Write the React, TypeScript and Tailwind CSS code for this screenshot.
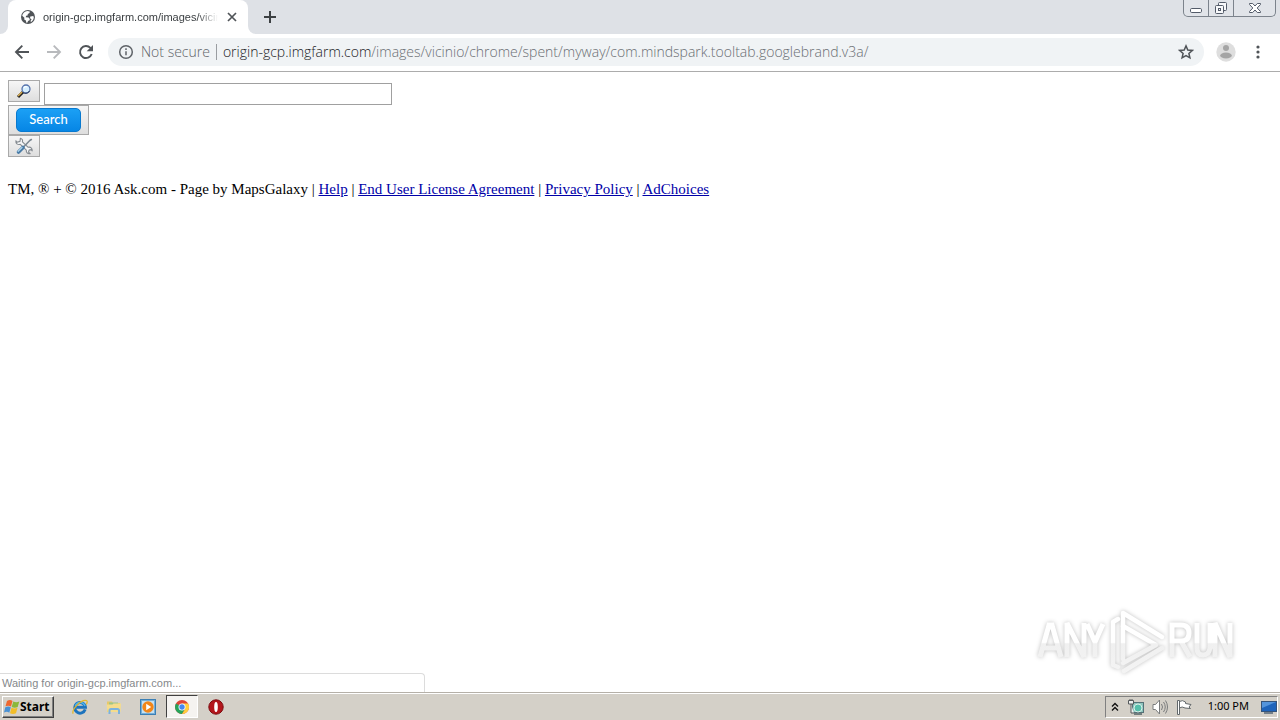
import type { ReactNode } from "react";

function GlobeIcon() {
  return (
    <svg className="size-4 shrink-0" viewBox="0 0 16 16" aria-hidden="true">
      <circle cx="8" cy="8" r="7" fill="#505458" />
      <path d="M2.2 6.8C2.6 4.2 4.8 2.3 7.4 2.1l2.4.3-.3 1.7-1.7.9-.2 1.4-1.5.4-.4 1.5 2.9.2 1.2 1.5-.2 1.3-1.6.6-.5 1.5-1.2.3-.4-2.1-1.7-1.2.2-1.6z" fill="#fff" />
      <path d="m10.3 7.6 3-.5.5 1.4c-.2 2-1.3 3.7-3 4.7l-.2-1.4 1-1.5-1.6-1z" fill="#fff" />
    </svg>
  );
}

function ChromeButton({ label, disabled, children }: { label: string; disabled?: boolean; children: ReactNode }) {
  return (
    <button aria-label={label} disabled={disabled} className="flex size-5 shrink-0 items-center justify-center text-[#505458] disabled:text-[#b8babd]">
      {children}
    </button>
  );
}

function TabStrip() {
  return (
    <div className="flex h-[34px] items-stretch bg-[#dee1e6]">
      <div className="flex w-2 bg-white">
        <div className="flex-1 rounded-br-lg bg-[#dee1e6]" />
      </div>
      <div className="flex w-60 items-center rounded-t-lg bg-white pr-2 pl-3">
        <GlobeIcon />
        <span className="ml-[7px] min-w-0 flex-1 font-['Liberation_Sans',sans-serif] text-[11px] whitespace-nowrap text-[#3c4043] [mask-image:linear-gradient(to_right,black_88%,transparent)]">
          origin-gcp.imgfarm.com/images/vicin
        </span>
        <button aria-label="Close tab" className="ml-1.5 flex size-4 shrink-0 items-center justify-center">
          <svg className="size-3" viewBox="0 0 12 12" fill="none" stroke="#505458" strokeWidth="1.7">
            <path d="m2 2 8 8M10 2l-8 8" />
          </svg>
        </button>
      </div>
      <div className="flex w-2 bg-white">
        <div className="flex-1 rounded-bl-lg bg-[#dee1e6]" />
      </div>
      <button aria-label="New tab" className="flex w-7 items-center justify-center">
        <svg className="size-[14px]" viewBox="0 0 14 14" stroke="#3c4043" strokeWidth="2">
          <path d="M7 1v12M1 7h12" />
        </svg>
      </button>
      <div className="mr-1 ml-auto flex h-[17px] divide-x divide-[#7c838c] rounded-b-[5px] border border-t-0 border-[#7c838c] bg-[#e1e4e9]">
        <button aria-label="Minimize" className="flex w-[25px] items-center justify-center">
          <svg className="h-4 w-6" viewBox="0 0 24 16" fill="#fff" stroke="#535b69">
            <rect x="6.5" y="8.5" width="11" height="4" rx="1.2" />
          </svg>
        </button>
        <button aria-label="Restore" className="flex w-[25px] items-center justify-center">
          <svg className="h-4 w-6" viewBox="0 0 24 16" fill="#f7f8fa" stroke="#535b69">
            <rect x="9.5" y="2.5" width="8" height="8" rx="1" />
            <rect x="6.5" y="5.5" width="8" height="8" rx="1" />
            <rect x="9.5" y="8.5" width="2" height="2" />
          </svg>
        </button>
        <button aria-label="Close" className="flex w-[41px] items-center justify-center">
          <svg className="h-4 w-6" viewBox="0 0 24 16" fill="#fff" stroke="#535b69">
            <path d="M6.5 3.5h3.2L12 6l2.3-2.5h3.2v1L14.2 8l3.3 3.5v1h-3.2L12 10l-2.3 2.5H6.5v-1L9.8 8 6.5 4.5z" />
          </svg>
        </button>
      </div>
    </div>
  );
}

function Toolbar() {
  return (
    <div className="flex h-[38px] items-center border-b border-[#acacac] bg-white pb-0.5 pl-3">
      <div className="flex gap-3">
        <ChromeButton label="Back">
          <svg className="size-4" viewBox="0 0 16 16" fill="none" stroke="currentColor" strokeWidth="1.9">
            <path d="M15 8H2.5M8.3 1.7 2 8l6.3 6.3" />
          </svg>
        </ChromeButton>
        <ChromeButton label="Forward" disabled>
          <svg className="size-4" viewBox="0 0 16 16" fill="none" stroke="currentColor" strokeWidth="1.9">
            <path d="M1 8h12.5M7.7 1.7 14 8l-6.3 6.3" />
          </svg>
        </ChromeButton>
        <ChromeButton label="Reload">
          <svg className="size-4" viewBox="0 0 16 16" fill="none" stroke="currentColor" strokeWidth="1.9">
            <path d="M13.7 10A6 6 0 1 1 12.4 3.9L14 5.5" />
            <path d="M15 1v6.3H8.7z" fill="currentColor" stroke="none" />
          </svg>
        </ChromeButton>
      </div>
      <div className="ml-3 flex h-7 min-w-0 flex-1 items-center rounded-full bg-[#f0f3f5] px-2.5 font-['Open_Sans',sans-serif] text-sm font-light">
        <svg className="size-4 shrink-0" viewBox="0 0 16 16" fill="none" stroke="#5f6368" strokeWidth="1.5" aria-hidden="true">
          <circle cx="8" cy="8" r="6.3" />
          <path d="M8 7.2v4M8 4.3v1.6" />
        </svg>
        <span className="ml-[7px] shrink-0 text-[#5f6368]">Not secure</span>
        <span className="mx-1.5 h-4 w-px bg-[#9a9da1]" />
        <div role="textbox" aria-label="Address" tabIndex={0} className="min-w-0 flex-1 truncate text-[#6a6e73]">
          <span className="text-[#202124]">origin-gcp.imgfarm.com</span>
          /images/vicinio/chrome/spent/myway/com.mindspark.tooltab.googlebrand.v3a/
        </div>
        <button aria-label="Bookmark this page" className="size-4 shrink-0">
          <svg className="size-4" viewBox="0 0 16 16" fill="none" stroke="#505458" strokeWidth="1.5">
            <path d="m8 1.9 1.8 4.1 4.5.4-3.4 3 1 4.4L8 11.5l-3.9 2.3 1-4.4-3.4-3 4.5-.4z" />
          </svg>
        </button>
      </div>
      <button aria-label="Profile" className="ml-3 size-5">
        <svg className="size-5" viewBox="0 0 20 20">
          <circle cx="10" cy="10" r="9.7" fill="#dedede" />
          <circle cx="10" cy="6" r="3" fill="#a5a5a5" />
          <ellipse cx="10" cy="13.5" rx="5.8" ry="3" fill="#a5a5a5" />
        </svg>
      </button>
      <button aria-label="Menu" className="mr-3 ml-4 size-4">
        <svg className="size-4" viewBox="0 0 16 16" fill="#505458">
          <circle cx="6" cy="3" r="1.6" />
          <circle cx="6" cy="8" r="1.6" />
          <circle cx="6" cy="13" r="1.6" />
        </svg>
      </button>
    </div>
  );
}

function Watermark() {
  return (
    <svg className="absolute right-10 bottom-4 h-[70px] w-[210px] drop-shadow-[0_0_2px_rgba(0,0,0,0.25)]" viewBox="0 0 210 70" role="img" aria-label="ANY RUN">
      <defs>
        <linearGradient id="watermark-shade" gradientUnits="userSpaceOnUse" x1="0" y1="0" x2="0" y2="70">
          <stop offset="0.52" stopColor="#fff" />
          <stop offset="0.54" stopColor="#f0f0f0" />
          <stop offset="1" stopColor="#f4f4f4" />
        </linearGradient>
      </defs>
      <g fill="none" stroke="url(#watermark-shade)" strokeWidth="4.5" strokeLinejoin="round" strokeLinecap="round">
        <path d="M93 53V7l39 24" />
        <path d="M93 20l33 19-33 18" />
        <path d="M88 13l-5 3v43l5 2M94 65l38-23" />
      </g>
      <g fill="none" stroke="url(#watermark-shade)" strokeWidth="5">
        <path d="m10 51 9-32h3l9 32M13 42h15M37 51V17l17 34V17M57 18l8 18 8-18M65 34v17" />
        <path d="M142 51V19h9q8 0 8 8t-8 8h-9m9 0 9 16M167 17v25q0 7 6 7t7-7V17M185 51V17l15 34V17" />
      </g>
    </svg>
  );
}

const links = ["Help", "End User License Agreement", "Privacy Policy", "AdChoices"];
const greyButton =
  "flex items-center justify-center border border-[#a9a9a9] bg-linear-to-b from-[#f6f6f6] to-[#dedede]";

function PageContent() {
  return (
    <main className="relative flex-1 bg-white p-2">
      <form className="flex flex-col items-start">
        <div className="flex h-[25px] w-full items-start gap-1">
          <button type="button" aria-label="Search options" className={greyButton + " h-[22px] w-8"}>
            <svg className="size-4" viewBox="0 0 16 16">
              <path d="m2 14 5-5" stroke="#222" strokeWidth="3" />
              <path d="m2 13 4-4" stroke="#d9ad4f" strokeWidth="1.6" />
              <circle cx="10" cy="6" r="4" fill="#d5efff" stroke="#5673ad" strokeWidth="1.3" />
              <path d="M7 9.5c2 1.5 5 1 6.5-1.5" fill="none" stroke="#1d2c4d" />
              <path d="M8 5q1-2 3-1" fill="none" stroke="#fff" strokeWidth="1.3" />
            </svg>
          </button>
          <input aria-label="Search query" type="text" className="mt-[3px] h-[22px] w-[348px] border border-[#a0a0a0] px-1" />
        </div>
        <button type="button" className={greyButton + " h-[30px] w-[81px]"}>
          <span className="flex h-6 w-[65px] items-center justify-center rounded-[5px] border border-[#0879cf] bg-linear-to-b from-[#1ba0f5] to-[#0686e5] font-['Lato',sans-serif] text-[13px] font-medium text-white">
            Search
          </span>
        </button>
        <button type="button" aria-label="Settings" className={greyButton + " h-[22px] w-8"}>
          <svg className="size-[18px]" viewBox="0 0 18 18" fill="none" strokeLinecap="round" strokeLinejoin="round">
            <path d="M5.4 1.2 5 4.4 2 5.2.9 3.8C.6 6.5 2.5 8 5.3 7.4l6 5.8c-.2 2.2 1.2 3.9 3.9 3.4l-1.7-1.5.6-2 2.1-.5 1 1.2c.2-2.6-1.7-4.2-4-3.5L7.4 4.9c.5-1.7-.1-3.2-2-3.7z" fill="#f5f6f7" stroke="#858b91" strokeWidth="1.1" />
            <path d="m9 9.5 5.8-6 1.6-1" stroke="#7b8791" strokeWidth="1.5" />
            <path d="m3.5 15 4.5-4.5" stroke="#487aa5" strokeWidth="3.6" />
            <path d="m3.2 14.2 3.8-3.8" stroke="#a9d2ec" strokeWidth="1.4" />
          </svg>
        </button>
      </form>
      <p className="mt-[23px] font-['Liberation_Serif',serif] text-[15px] leading-[18px] text-black">
        TM, ® + © 2016 Ask.com - Page by MapsGalaxy
        {links.map((link) => (
          <span key={link}>
            {" | "}
            <a href="#" className="text-[#0000a8] underline">{link}</a>
          </span>
        ))}
      </p>
      <Watermark />
      <div className="absolute bottom-0 left-0 h-[19px] w-[425px] rounded-tr border-t border-r border-[#dcdcdc] bg-white pl-0.5 font-['Liberation_Sans',sans-serif] text-[11px] leading-[18px] text-[#85888b]">
        Waiting for origin-gcp.imgfarm.com...
      </div>
    </main>
  );
}

function TaskButton({ label, active, children }: { label: string; active?: boolean; children: ReactNode }) {
  return (
    <button
      aria-label={label}
      className={
        active
          ? "flex h-[23px] w-8 items-center justify-center border border-t-[#404040] border-r-white border-b-white border-l-[#404040] bg-[#f5f3f0]"
          : "flex h-[23px] w-8 items-center justify-center"
      }
    >
      <svg className="size-4" viewBox="0 0 16 16">
        {children}
      </svg>
    </button>
  );
}

function Taskbar() {
  return (
    <footer className="flex h-7 items-center border-t border-[#b5b0a8] bg-[#d4d0c8] font-['Noto_Sans',sans-serif] text-[11px] text-black shadow-[inset_0_1px_white]">
      <button className="ml-0.5 flex h-[22px] w-[52px] items-center border border-t-white border-r-[#404040] border-b-[#404040] border-l-white pl-px text-xs font-bold shadow-[inset_-1px_-1px_#808080]">
        <svg className="size-4 shrink-0" viewBox="0 0 16 16" aria-hidden="true">
          <path d="M3 2q3-2 5.5 0L7 7.5Q4.5 6 1.5 7.3z" fill="#ef6830" />
          <path d="M9.3 2.5q3 1.5 6 0L13.7 8q-3 1.5-6 0z" fill="#8bb83b" />
          <path d="M1.3 8.3q3-1.5 5.5 0l-1.5 5.4Q3 12 0 13.5z" fill="#4a91d4" />
          <path d="M7.5 8.8q3 1.5 6 0L12 14.2q-3 1.5-6 0z" fill="#f2bd28" />
        </svg>
        Start
      </button>
      <nav className="ml-[10px] flex gap-[2px]">
        <TaskButton label="Internet Explorer">
          <path d="M13.2 10.4A5.3 5.3 0 1 1 13.4 8.2H4.5" fill="none" stroke="#1d73bd" strokeWidth="3" />
          <path d="M3.3 7A5.1 5.1 0 0 1 13 7" fill="none" stroke="#4bb3eb" strokeWidth="1.6" />
          <path d="M1.2 14.6C-.8 11 9-.1 14.5 1.5c1.2.5.6 2.5-.2 4" fill="none" stroke="#e3b72c" strokeWidth="1.3" />
        </TaskButton>
        <TaskButton label="File Explorer">
          <path d="M1 2.5h5l1 1.5h7v9H1z" fill="#e7c869" />
          <path d="M3 3.5h9v3H3z" fill="#9cc587" />
          <path d="M.5 5.5h6l1-1H15l-.5 8.5h-13z" fill="#f5dc8c" />
          <path d="M3.5 15v-3.5q0-1.5 1.5-1.5h6.5q1.500 0 1.500 1.500V15" fill="none" stroke="#7bb2dd" strokeWidth="2" />
        </TaskButton>
        <TaskButton label="Media Player">
          <rect x=".5" y=".5" width="15" height="15" fill="#74afd9" stroke="#3c7fb4" />
          <rect x="2" y="2" width="12" height="12" fill="#c6e1f2" />
          <circle cx="8" cy="8" r="5.7" fill="#f28619" />
          <path d="m6.2 4.8 5 3.2-5 3.2z" fill="#fff" />
        </TaskButton>
        <TaskButton label="Google Chrome" active>
          <circle cx="8" cy="8" r="7" fill="#de4437" />
          <path d="M8 8 2 4.5A7 7 0 0 0 8 15l3.2-5.5z" fill="#25a45a" />
          <path d="M8 15a7 7 0 0 0 6.1-10.5H8L11.2 10z" fill="#ffce3d" />
          <circle cx="8" cy="8" r="3.5" fill="#fff" />
          <circle cx="8" cy="8" r="2.7" fill="#4487ef" />
        </TaskButton>
        <TaskButton label="Opera">
          <circle cx="8" cy="8" r="7.2" fill="#b3161c" stroke="#7d0c10" />
          <ellipse cx="8" cy="8" rx="1.800" ry="5" fill="#fff" />
        </TaskButton>
      </nav>
      <div className="mr-0.5 ml-auto flex h-[22px] items-center border border-t-[#808080] border-r-white border-b-white border-l-[#808080] pl-1">
        <button aria-label="Show hidden icons">
          <svg className="size-2.5" viewBox="0 0 10 10" fill="none" stroke="#111" strokeWidth="1.4">
            <path d="m2 4.5 3-3 3 3M2 8.5l3-3 3 3" />
          </svg>
        </button>
        <svg className="ml-2 size-4" viewBox="0 0 16 16" aria-label="Network">
          <rect x="4.5" y="3.500" width="11" height="10" fill="#8cc4bd" stroke="#557177" />
          <circle cx="10" cy="9" r="4" fill="#55bfab" stroke="#dceee8" />
          <path d="M.5 1.500h5v3.500h-5zM3 5v9h3" fill="#eee" stroke="#54595b" />
          <path d="M2 0v2M4 0v2" stroke="#54595b" />
          <path d="M6 15h8" stroke="#526266" strokeWidth="1.5" />
        </svg>
        <svg className="ml-2 size-4" viewBox="0 0 16 16" aria-label="Volume" fill="none" stroke="#7a7c7d">
          <path d="M1 5.5h2.5L7.5 1v14l-4-4.500H1z" fill="#fff" />
          <path d="M9.5 5q2 3 0 6M11.5 3q3.500 5 0 10M13.500 1.500q4 6.500 0 13" />
        </svg>
        <svg className="ml-2 size-4" viewBox="0 0 16 16" aria-label="Action center" fill="#fff" stroke="#62686b">
          <path d="M1.5 1.5h2v14h-2zM3.5 2.5q3-2 6 .5v1.5l5.5 1-2 2.5 1.5 1.5-5.5-.5q-3-2-5.5 0z" />
        </svg>
        <time className="ml-4">1:00 PM</time>
        <button aria-label="Show desktop" className="ml-3">
          <svg className="size-4" viewBox="0 0 16 16">
            <rect x=".5" y="2.5" width="15" height="10" fill="#1e64bb" stroke="#35547a" />
            <path d="M1 3h14L1 9z" fill="#5495dc" />
            <path d="M3 14h9" stroke="#536476" strokeWidth="1.5" />
          </svg>
        </button>
      </div>
    </footer>
  );
}

export default function App() {
  return (
    <div className="flex min-h-screen flex-col bg-white">
      <TabStrip />
      <Toolbar />
      <PageContent />
      <Taskbar />
    </div>
  );
}
